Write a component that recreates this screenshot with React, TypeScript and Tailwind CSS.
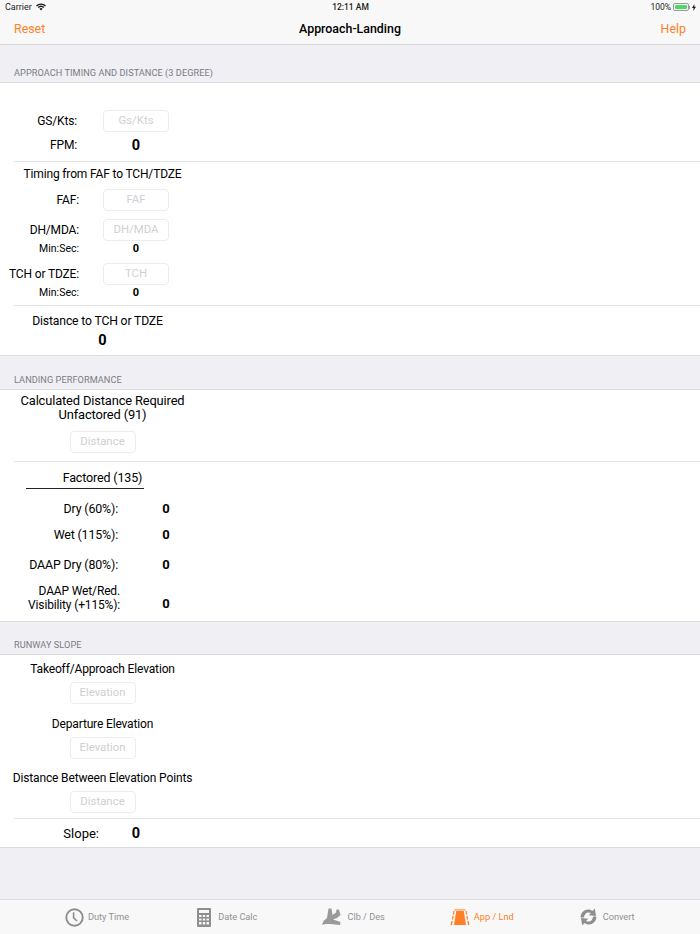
const ORANGE = "#ff7f27";

const Field = ({ text }: { text: string }) => (
	<div className="flex h-[22px] w-[66px] shrink-0 items-center justify-center rounded-[4px] border border-[#ececec] bg-white text-[11.4px] leading-none text-[#cfcfd1]">
		{text}
	</div>
);

const Divider = () => <div className="ml-[14px] h-px bg-[#e4e4e6]" />;

const SectionHeader = ({ text, className }: { text: string; className: string }) => (
	<div
		className={`flex items-end border-y border-[#dcdce0] bg-[#efeff4] pl-[14px] text-[9.2px] leading-[11px] tracking-[0.05px] text-[#7c7c82] ${className}`}
	>
		{text}
	</div>
);

// label right-aligned to x=79, field or value column starts at x=103
const FieldRow = ({ label, text, className }: { label: string; text: string; className: string }) => (
	<div className={`flex items-center ${className}`}>
		<div className="w-[79px] whitespace-nowrap text-[12px] leading-none tracking-[-0.15px] text-black">
			<span className="float-right">{label}</span>
		</div>
		<div className="ml-[24px]">
			<Field text={text} />
		</div>
	</div>
);

const MinSec = ({ className }: { className: string }) => (
	<div className={`flex items-center ${className}`}>
		<div className="w-[79px] text-right text-[10.5px] leading-none text-black">Min:Sec:</div>
		<div className="-mt-px ml-[24px] w-[66px] text-center text-[11px] font-bold leading-none text-black">0</div>
	</div>
);

const CenterText = ({ children, className }: { children: React.ReactNode; className: string }) => (
	<div className={`flex w-[205px] items-center justify-center text-center leading-[14px] text-black ${className}`}>
		{children}
	</div>
);

const FieldCenter = ({ text, className }: { text: string; className: string }) => (
	<div className={`flex w-[205px] justify-center ${className}`}>
		<Field text={text} />
	</div>
);

const ResultRow = ({ label, className }: { label: React.ReactNode; className: string }) => (
	<div className={`flex items-center ${className}`}>
		<div className="w-[118px] text-right text-[12.4px] leading-[14px] tracking-[-0.15px] text-black">{label}</div>
		<div className="-mt-px ml-[42px] w-[12px] text-center text-[13px] font-bold leading-none text-black">0</div>
	</div>
);

const ClockIcon = () => (
	<svg width="19" height="19" viewBox="0 0 19 19" fill="none" stroke="#8e8e8e">
		<circle cx="9.5" cy="9.5" r="8.2" strokeWidth="1.9" />
		<path d="M8.6 4.2 V9.8 L12 13" strokeWidth="1.6" />
	</svg>
);

const CalcIcon = () => (
	<svg width="14" height="19" viewBox="0 0 14 19" fill="#8e8e8e">
		<path
			fillRule="evenodd"
			d="M1 0 H13 A1 1 0 0 1 14 1 V18 A1 1 0 0 1 13 19 H1 A1 1 0 0 1 0 18 V1 A1 1 0 0 1 1 0 Z M2 2 V5 H12 V2 Z M2 7 V9 H4.5 V7 Z M5.8 7 V9 H8.2 V7 Z M9.5 7 V9 H12 V7 Z M2 10.5 V12.5 H4.5 V10.5 Z M5.8 10.5 V12.5 H8.2 V10.5 Z M9.5 10.5 V12.5 H12 V10.5 Z M2 14 V16.5 H4.5 V14 Z M5.8 14 V16.5 H8.2 V14 Z M9.5 14 V16.5 H12 V14 Z"
		/>
	</svg>
);

const PlaneIcon = () => (
	<svg width="19" height="18" viewBox="0 0 19 18" fill="#9a9a9a">
		<path d="M0 17 L1.5 13 L5 10 L6.5 0.5 L9.5 0.5 L10.5 7 L14 4.5 L14.5 1.5 L17 1.5 L18.5 7 L15 10 L11 11.5 L18.5 14 L18 17 L8 16 L3.5 16 Z" />
	</svg>
);

const RunwayIcon = () => (
	<svg width="20" height="17" viewBox="0 0 20 17" fill={ORANGE}>
		<path d="M6.2 2 H13.8 L16 16 H4 Z" />
		<path d="M4.5 0.4 H15.5 V1.4 H4.5 Z" />
		<path d="M3.4 2 L4.6 2 L4 5.5 L2.8 5.5 Z M2.5 7 L3.7 7 L3.1 10.5 L1.8 10.5 Z M1.4 12 L2.7 12 L2.1 16 L0.6 16 Z" />
		<path d="M16.6 2 L15.4 2 L16 5.5 L17.2 5.5 Z M17.5 7 L16.3 7 L16.9 10.5 L18.2 10.5 Z M18.6 12 L17.3 12 L17.9 16 L19.4 16 Z" />
	</svg>
);

const ConvertIcon = () => (
	<svg width="17" height="18" viewBox="0 0 17 18" fill="#8e8e8e">
		<path d="M0.6 9.4 C0.6 4.5 4.2 1.4 8.2 1.4 C10 1.4 11.4 2 12.5 2.9 L14.8 0.6 L16 8 L8.8 7.2 L10.9 5.1 C10.2 4.6 9.3 4.4 8.4 4.4 C6 4.4 4.2 6.4 4 9.4 Z" />
		<path d="M16.4 8.6 C16.4 13.5 12.8 16.6 8.8 16.6 C7 16.6 5.6 16 4.5 15.1 L2.2 17.4 L1 10 L8.2 10.8 L6.1 12.9 C6.8 13.4 7.7 13.6 8.6 13.6 C11 13.6 12.8 11.6 13 8.6 Z" />
	</svg>
);

const tabs = [
	{ name: "Duty Time", icon: <ClockIcon />, className: "ml-[65px] gap-[4px]" },
	{ name: "Date Calc", icon: <CalcIcon />, className: "ml-[68px] gap-[7px]" },
	{ name: "Clb / Des", icon: <PlaneIcon />, className: "ml-[65px] gap-[6px]" },
	{ name: "App / Lnd", icon: <RunwayIcon />, className: "ml-[65px] gap-[4px]", active: true },
	{ name: "Convert", icon: <ConvertIcon />, className: "ml-[66px] gap-[6px]" },
];

const body = "text-[12px] tracking-[-0.15px]";

const App = () => {
	return (
		<div className="flex h-[934px] w-[700px] flex-col overflow-hidden bg-[#efeff4] font-['Roboto','Liberation_Sans',sans-serif]">
			{/* status + nav */}
			<div className="h-[45px] shrink-0 border-b border-[#d6d6d8] bg-[#f8f8f8]">
				<div className="flex h-[14px] items-center justify-between pl-[5px] pr-[4px] text-[9px] leading-none text-[#1c1c1c]">
					<div className="flex w-[100px] items-center gap-[4px]">
						<span>Carrier</span>
						<svg width="10" height="8" viewBox="0 0 10 8" fill="#1c1c1c">
							<path d="M0 2.4 A7.2 7.2 0 0 1 10 2.4 L9 3.4 A5.8 5.8 0 0 0 1 3.4 Z M1.7 4.1 A4.8 4.8 0 0 1 8.3 4.1 L7.3 5.1 A3.4 3.4 0 0 0 2.7 5.1 Z M3.4 5.8 A2.4 2.4 0 0 1 6.6 5.8 L5 7.6 Z" />
						</svg>
					</div>
					<div className="text-[8.5px] font-medium">12:11 AM</div>
					<div className="flex w-[100px] items-center justify-end gap-[2px]">
						<span className="text-[8.5px]">100%</span>
						<div className="flex items-center">
							<div className="h-[8px] w-[16px] rounded-[2px] border border-[#9a9a9a] p-px">
								<div className="h-full w-full rounded-[1px] bg-[#4cd964]" />
							</div>
							<div className="h-[3px] w-px bg-[#9a9a9a]" />
						</div>
						<svg width="4" height="7" viewBox="0 0 4 7" fill="#1c1c1c">
							<path d="M2.4 0 L0 4 H1.6 L1.2 7 L4 2.8 H2.3 Z" />
						</svg>
					</div>
				</div>
				<div className="flex h-[30px] items-center justify-between px-[14px] text-[12.4px] leading-none">
					<span className="w-[60px] text-[#ff7f27]">Reset</span>
					<span className="font-medium text-black">Approach-Landing</span>
					<span className="w-[60px] text-right text-[#ff7f27]">Help</span>
				</div>
			</div>

			{/* approach */}
			<div className="flex h-[38px] shrink-0 items-end border-b border-[#dcdce0] bg-[#efeff4] pb-[4px] pl-[14px] text-[9.2px] leading-[11px] tracking-[0.05px] text-[#7c7c82]">
				APPROACH TIMING AND DISTANCE (3 DEGREE)
			</div>
			<div className="h-[272px] shrink-0 bg-white pt-[27px]">
				<div className="flex h-[22px] items-center">
					<div className="w-[77px] text-right text-[12px] leading-none tracking-[-0.15px] text-black">GS/Kts:</div>
					<div className="ml-[26px]">
						<Field text="Gs/Kts" />
					</div>
				</div>
				<div className="flex h-[26px] items-center">
					<div className="w-[77px] text-right text-[12px] leading-none tracking-[-0.15px] text-black">FPM:</div>
					<div className="ml-[26px] mt-[2px] w-[66px] text-center text-[14.5px] font-bold leading-none text-black">0</div>
				</div>
				<div className="h-[3px]" />
				<Divider />
				<CenterText className={`h-[24px] ${body}`}>Timing from FAF to TCH/TDZE</CenterText>
				<FieldRow label="FAF:" text="FAF" className="mt-[3px] h-[22px]" />
				<FieldRow label="DH/MDA:" text="DH/MDA" className="mt-[8px] h-[22px]" />
				<MinSec className="mt-[1px] h-[14px]" />
				<FieldRow label="TCH or TDZE:" text="TCH" className="mt-[7px] h-[22px]" />
				<MinSec className="mt-[1px] h-[14px]" />
				<div className="h-[5px]" />
				<Divider />
				<div className="mt-[8px] flex h-[14px] w-[195px] items-center justify-center text-[12.2px] leading-[14px] tracking-[-0.15px] text-black">
					Distance to TCH or TDZE
				</div>
				<div className="mt-[5px] flex h-[16px] w-[205px] items-center justify-center text-[14.5px] font-bold leading-none text-black">0</div>
			</div>

			{/* landing */}
			<SectionHeader text="LANDING PERFORMANCE" className="h-[35px] pb-[4.5px]" />
			<div className="h-[231px] shrink-0 bg-white pt-[4px]">
				<CenterText className="h-[28px] text-[12.9px] tracking-[-0.15px]">
					Calculated Distance Required
					<br />
					Unfactored (91)
				</CenterText>
				<FieldCenter text="Distance" className="mt-[9px]" />
				<div className="h-[8px]" />
				<Divider />
				<CenterText className="mt-[9px] h-[14px] text-[12.5px] tracking-[-0.15px]">Factored (135)</CenterText>
				<div className="ml-[26px] mt-[3px] h-px w-[118px] bg-[#222]" />
				<ResultRow label="Dry (60%):" className="mt-[13px] h-[14px]" />
				<ResultRow label="Wet (115%):" className="mt-[12px] h-[14px]" />
				<ResultRow label="DAAP Dry (80%):" className="mt-[16px] h-[14px]" />
				<div className="mt-[12px] flex h-[28px] items-center">
					<div className="w-[120px] text-right text-[12px] leading-[14px] tracking-[-0.15px] text-black">
						DAAP Wet/Red.
						<br />
						Visibility (+115%):
					</div>
					<div className="ml-[40px] mt-[11px] w-[12px] text-center text-[13px] font-bold leading-none text-black">0</div>
				</div>
			</div>

			{/* slope */}
			<SectionHeader text="RUNWAY SLOPE" className="h-[34px] pb-[4px]" />
			<div className="h-[193px] shrink-0 border-b border-[#dcdce0] bg-white pt-[7px]">
				<CenterText className={`h-[14px] ${body}`}>Takeoff/Approach Elevation</CenterText>
				<FieldCenter text="Elevation" className="mt-[6px]" />
				<CenterText className={`mt-[13px] h-[14px] ${body}`}>Departure Elevation</CenterText>
				<FieldCenter text="Elevation" className="mt-[6px]" />
				<CenterText className={`mt-[12px] h-[14px] ${body}`}>Distance Between Elevation Points</CenterText>
				<FieldCenter text="Distance" className="mt-[6px]" />
				<div className="h-[5px]" />
				<Divider />
				<div className="mt-[7px] flex h-[14px] items-center">
					<div className="w-[99px] text-right text-[13px] leading-none text-black">Slope:</div>
					<div className="ml-[4px] mt-[2px] w-[66px] text-center text-[14.5px] font-bold leading-none text-black">0</div>
				</div>
			</div>

			<div className="flex-1" />

			{/* tab bar */}
			<div className="flex h-[35px] shrink-0 items-center border-t border-[#dcdcde] bg-[#f8f8f8]">
				{tabs.map((tab) => (
					<div key={tab.name} className={`flex items-center ${tab.className}`}>
						{tab.icon}
						<span className={`text-[9.2px] leading-none ${tab.active ? "text-[#ff7f27]" : "text-[#909094]"}`}>
							{tab.name}
						</span>
					</div>
				))}
			</div>
		</div>
	);
};

export default App;
